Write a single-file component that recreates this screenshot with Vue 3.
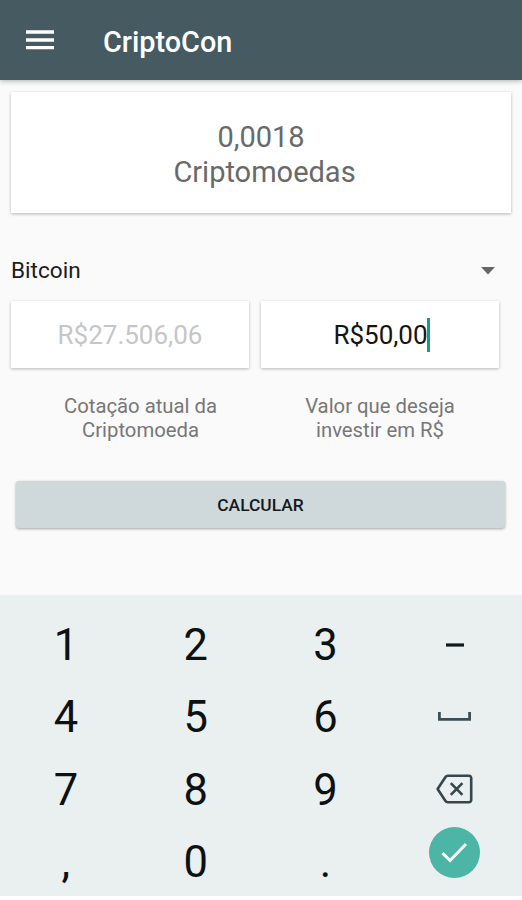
<script setup>
import { ref } from 'vue'

const result = ref('0,0018')
const currency = ref('Bitcoin')
const quote = ref('R$27.506,06')
const amount = ref('R$50,00')

const keys = ['1', '2', '3', 'minus', '4', '5', '6', 'space', '7', '8', '9', 'delete', ',', '0', '.', 'done']
</script>

<template>
  <div class="screen">
    <header class="bar">
      <svg class="menu" width="28" height="20" viewBox="0 0 28 20">
        <path d="M0 2h28M0 10h28M0 17.7h28" stroke="#fff" stroke-width="3.3" />
      </svg>
      <h1 class="title">CriptoCon</h1>
    </header>

    <main class="content">
      <section class="card result">
        <span>{{ result }}</span>
        <span class="unit">Criptomoedas</span>
      </section>

      <div class="spinner">
        <span>{{ currency }}</span>
        <svg width="14" height="8" viewBox="0 0 14 8"><path d="M0 0h14L7 7.5z" fill="#666" /></svg>
      </div>

      <div class="fields">
        <div class="field">
          <div class="card value muted"><span>{{ quote }}</span></div>
          <p class="label left">Cotação atual da<br />Criptomoeda</p>
        </div>
        <div class="field">
          <div class="card value active"><span>{{ amount }}</span><i class="caret"></i></div>
          <p class="label">Valor que deseja<br />investir em R$</p>
        </div>
      </div>

      <button class="calc" type="button">CALCULAR</button>
    </main>

    <div class="keypad">
      <div v-for="k in keys" :key="k" class="key" :class="k">
        <svg v-if="k === 'minus'" width="18" height="4" viewBox="0 0 18 4">
          <path d="M0 2h18" stroke="#10191b" stroke-width="3.2" />
        </svg>
        <svg v-else-if="k === 'space'" width="33" height="9" viewBox="0 0 33 9">
          <path d="M1.4 0v7.4h30.2V0" fill="none" stroke="#3c4f54" stroke-width="2.8" />
        </svg>
        <svg v-else-if="k === 'delete'" width="37" height="30" viewBox="0 0 37 30">
          <g fill="none" stroke="#35474c" stroke-width="2.6" stroke-linejoin="round">
            <path d="M11.8 1.8H33a2.2 2.2 0 0 1 2.2 2.2v22a2.2 2.2 0 0 1-2.2 2.2H11.8q-1.5 0-2.3-1.2L1.6 15 9.5 3q.8-1.2 2.3-1.2z" />
            <path d="M14.8 9.2l11.6 11.6M26.4 9.2L14.8 20.8" />
          </g>
        </svg>
        <span v-else-if="k === 'done'" class="disc">
          <svg width="27" height="21" viewBox="0 0 27 21">
            <path d="M1.5 11.2l7.6 7.3L25 2" fill="none" stroke="#fff" stroke-width="3" />
          </svg>
        </span>
        <template v-else>{{ k }}</template>
      </div>
    </div>
  </div>
</template>

<style>
body {
  margin: 0;
  background: #fff;
}
</style>

<style scoped>
.screen {
  width: 522px;
  height: 900px;
  overflow: hidden;
  display: flex;
  flex-direction: column;
  background: #fff;
  font-family: Roboto, sans-serif;
}

.bar {
  flex: none;
  box-sizing: border-box;
  height: 80px;
  display: flex;
  align-items: center;
  gap: 49px;
  padding: 3px 26px 0;
  background: #455a61;
  box-shadow: 0 1px 5px rgba(0, 0, 0, 0.3);
  z-index: 1;
}

.menu {
  display: block;
  margin-bottom: 4px;
}

.title {
  margin: 0;
  color: #fff;
  font-size: 28.8px;
  font-weight: 500;
  line-height: 36px;
}

.content {
  flex: none;
  box-sizing: border-box;
  height: 515px;
  padding: 12px 11px 0;
  background: #fafafa;
}

.card {
  background: #fff;
  box-shadow: 0 1px 3px rgba(0, 0, 0, 0.28);
}

.result {
  box-sizing: border-box;
  height: 121px;
  width: 500px;
  display: flex;
  flex-direction: column;
  align-items: center;
  padding-top: 28px;
  color: #696969;
  font-size: 29px;
  line-height: 34.5px;
}

.unit {
  padding-left: 7px;
}

.spinner {
  display: flex;
  align-items: center;
  justify-content: space-between;
  height: 30px;
  margin-top: 43px;
  padding-right: 16px;
  color: #1c1c1c;
  font-size: 22.6px;
  line-height: 32px;
}

.fields {
  display: grid;
  grid-template-columns: 238px 238px;
  gap: 12px;
  margin-top: 15px;
}

.value {
  height: 67px;
  display: flex;
  align-items: center;
  justify-content: center;
  color: #141414;
  font-size: 26px;
}

.active {
  box-sizing: border-box;
  padding-left: 3px;
}

.muted {
  color: #c6c6c6;
}

.caret {
  width: 3px;
  height: 34px;
  margin-left: -1px;
  background: #1d9a80;
}

.label {
  margin: 26px 0 0;
  text-align: center;
  color: #777;
  font-size: 20.3px;
  line-height: 24px;
}

.left {
  padding-left: 21px;
}

.calc {
  display: block;
  width: 489px;
  height: 47px;
  margin: 39px 0 0 5px;
  padding: 0;
  border: 0;
  border-radius: 3px;
  background: #cfd8da;
  box-shadow: 0 1px 3px rgba(0, 0, 0, 0.35);
  color: #141a1c;
  font-family: inherit;
  font-size: 17.4px;
  font-weight: 500;
}

.keypad {
  flex: none;
  box-sizing: border-box;
  height: 301px;
  overflow: hidden;
  padding: 15px 2px 0 1px;
  display: grid;
  grid-template-columns: repeat(4, 1fr);
  grid-template-rows: repeat(4, 72.3px);
  background: #eaeff0;
  color: #0c1112;
  font-size: 43.5px;
  line-height: 72px;
}

.key {
  display: flex;
  align-items: center;
  justify-content: center;
}

.minus {
  padding-bottom: 3px;
}

.space,
.delete {
  padding: 0 1px 4px 0;
}

.done {
  padding-right: 1px;
}

.disc {
  display: flex;
  align-items: center;
  justify-content: center;
  width: 51px;
  height: 51px;
  margin-bottom: 22px;
  border-radius: 50%;
  background: #4cb5a6;
}
</style>
